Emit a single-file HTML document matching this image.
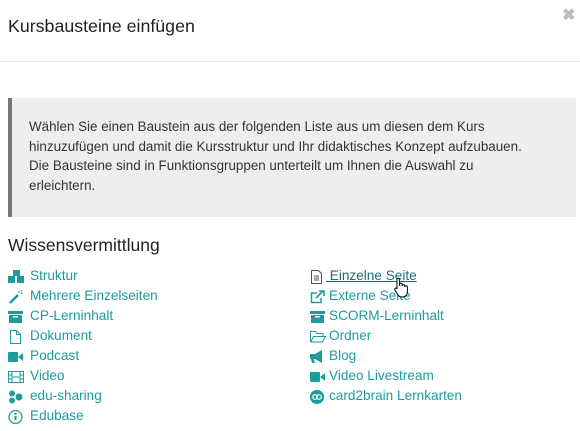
<!DOCTYPE html>
<html><head><meta charset="utf-8"><style>
*{margin:0;padding:0;box-sizing:border-box}
body{width:580px;height:431px;background:#fff;font-family:"Liberation Sans",sans-serif;color:#333;overflow:hidden;position:relative}
.title{position:absolute;left:8px;top:16px;font-size:17.8px;color:#222}
.close{position:absolute;left:562px;top:5px;font-size:16px;color:#bbb;font-weight:bold}
.hr{position:absolute;left:0;top:61px;width:580px;height:1px;background:#e5e5e5}
.box{position:absolute;left:8px;top:98px;width:568px;height:119px;background:#eee;border-left:4px solid #777;padding:19px 0 0 17px;font-size:13.4px;line-height:19.7px;color:#333}
.h{position:absolute;left:8px;top:235px;font-size:17.5px;color:#222}
.item{position:absolute;font-size:13.6px;color:#1e9b9c;white-space:nowrap}
.item svg{position:absolute;left:0;top:2px}
.item span{position:absolute;top:0}
</style></head><body>
<div class="title">Kursbausteine einfügen</div>
<div class="close">✖</div>
<div class="hr"></div>
<div class="box">Wählen Sie einen Baustein aus der folgenden Liste aus um diesen dem Kurs<br>hinzuzufügen und damit die Kursstruktur und Ihr didaktisches Konzept aufzubauen.<br>Die Bausteine sind in Funktionsgruppen unterteilt um Ihnen die Auswahl zu<br>erleichtern.</div>
<div class="h">Wissensvermittlung</div>

<div class="item" style="left:8px;top:268px"><svg width="18" height="14"><g fill="#1e9b9c"><rect x="5" y="0" width="7" height="6"/><rect x="0" y="6" width="7" height="7"/><rect x="9" y="6" width="7" height="7"/></g></svg><span style="left:22px">Struktur</span></div>
<div class="item" style="left:8px;top:288px"><svg width="18" height="14"><path d="M2 13 L10 5" stroke="#1e9b9c" stroke-width="2.5"/><path d="M11 1v2M13 3h2M14 0l-1 1" stroke="#1e9b9c" stroke-width="1"/></svg><span style="left:22px">Mehrere Einzelseiten</span></div>
<div class="item" style="left:8px;top:308px"><svg width="18" height="14"><rect x="0" y="1" width="15" height="3" fill="#1e9b9c"/><rect x="1" y="5" width="13" height="8" fill="#1e9b9c"/><rect x="5" y="6" width="5" height="1.5" fill="#fff"/></svg><span style="left:22px">CP-Lerninhalt</span></div>
<div class="item" style="left:8px;top:328px"><svg width="18" height="14"><path d="M2.5 .5h6l4 4v9h-10z M8.5 .5v4h4" fill="none" stroke="#1e9b9c"/></svg><span style="left:22px">Dokument</span></div>
<div class="item" style="left:8px;top:348px"><svg width="18" height="14"><rect x="0" y="2" width="10" height="10" rx="1" fill="#1e9b9c"/><path d="M10 7l5-4v8z" fill="#1e9b9c"/></svg><span style="left:22px">Podcast</span></div>
<div class="item" style="left:8px;top:368px"><svg width="18" height="14"><rect x=".5" y="1.5" width="15" height="11" fill="none" stroke="#1e9b9c"/><path d="M4 1v12M12 1v12M1 5h3M1 9h3M12 5h3M12 9h3M4 7h8" stroke="#1e9b9c"/></svg><span style="left:22px">Video</span></div>
<div class="item" style="left:8px;top:388px"><svg width="18" height="14"><circle cx="4" cy="3.5" r="3" fill="#1e9b9c"/><circle cx="4" cy="10.5" r="3" fill="#1e9b9c"/><circle cx="11" cy="7" r="3.5" fill="#1e9b9c"/></svg><span style="left:22px">edu-sharing</span></div>
<div class="item" style="left:8px;top:408px"><svg width="18" height="14"><circle cx="7.5" cy="7" r="6.5" fill="none" stroke="#1e9b9c" stroke-width="1.3"/><rect x="6.5" y="3" width="2" height="2" fill="#1e9b9c"/><rect x="6.5" y="6" width="2" height="4" fill="#1e9b9c"/></svg><span style="left:22px">Edubase</span></div>

<div class="item" style="left:310px;top:268px"><svg width="18" height="14"><path d="M1.5 .5h7l3 3v10h-10z M4 6h5M4 8h5M4 10h5" fill="none" stroke="#456"/></svg><span style="left:16px;color:#1a6e70;text-decoration:underline">&nbsp;Einzelne Seite</span></div>
<div class="item" style="left:310px;top:288px"><svg width="18" height="14"><path d="M11 8v4.5H1.5V3H7" fill="none" stroke="#1e9b9c" stroke-width="1.5"/><path d="M6 8l7-7M9 1h5v5" fill="none" stroke="#1e9b9c" stroke-width="1.6"/></svg><span style="left:19px">Externe Seite</span></div>
<div class="item" style="left:310px;top:308px"><svg width="18" height="14"><rect x="0" y="1" width="15" height="3" fill="#1e9b9c"/><rect x="1" y="5" width="13" height="8" fill="#1e9b9c"/><rect x="5" y="6" width="5" height="1.5" fill="#fff"/></svg><span style="left:19px">SCORM-Lerninhalt</span></div>
<div class="item" style="left:310px;top:328px"><svg width="18" height="14"><path d="M.5 12V1.5h5l1.5 2h6v3M.5 12l3-5.5h12L12.5 12z" fill="none" stroke="#1e9b9c"/></svg><span style="left:19px">Ordner</span></div>
<div class="item" style="left:310px;top:348px"><svg width="18" height="14"><path d="M0 4h5l7-4v13l-7-4H4l1 4H2L1 9H0z" fill="#1e9b9c"/></svg><span style="left:19px">Blog</span></div>
<div class="item" style="left:310px;top:368px"><svg width="18" height="14"><rect x="0" y="2" width="10" height="10" rx="1" fill="#1e9b9c"/><path d="M10 7l5-4v8z" fill="#1e9b9c"/></svg><span style="left:19px">Video Livestream</span></div>
<div class="item" style="left:310px;top:388px"><svg width="18" height="14"><circle cx="7" cy="7" r="7" fill="#1e9b9c"/><circle cx="5" cy="7" r="2.3" fill="none" stroke="#fff" stroke-width="1.2"/><circle cx="9" cy="7" r="2.3" fill="none" stroke="#fff" stroke-width="1.2"/></svg><span style="left:19px">card2brain Lernkarten</span></div>

<svg style="position:absolute;left:393px;top:277px" width="18" height="22"><path d="M4 12V2.5a1.3 1.3 0 0 1 2.6 0V9V7.5a1.3 1.3 0 0 1 2.6 0V9a1.3 1.3 0 0 1 2.6 0v1a1.3 1.3 0 0 1 2.6 0v5c0 3-2 5-5 5h-1c-2 0-3-1-4-3l-2.5-4a1.3 1.3 0 0 1 2.1-1.5z" fill="#fff" stroke="#000" stroke-width="1"/></svg>
</body></html>
